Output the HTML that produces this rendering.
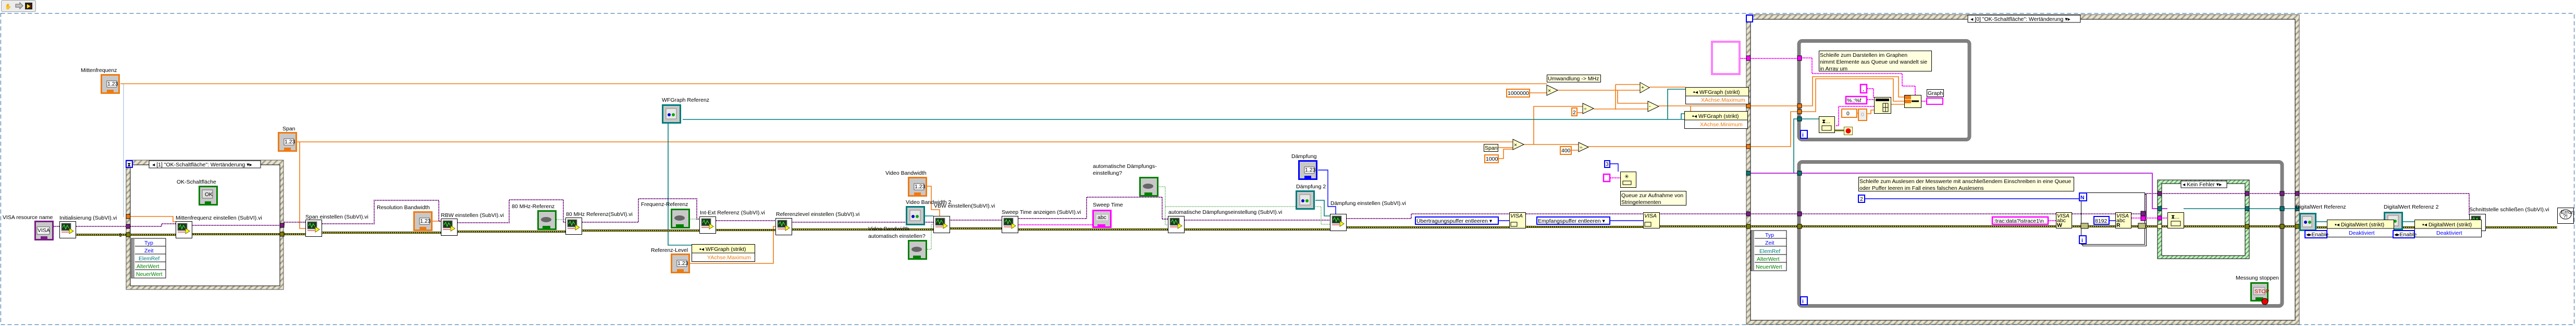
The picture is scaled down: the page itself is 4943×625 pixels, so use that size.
<!DOCTYPE html>
<html><head><meta charset="utf-8"><style>
html,body{margin:0;padding:0;background:#fff;width:4943px;height:625px;overflow:hidden}
svg{display:block}
text{font-family:"Liberation Sans",sans-serif;font-size:10.5px;fill:#000}
.o{stroke:#f07a10;stroke-width:1.6;fill:none}
.t{stroke:#007b7b;stroke-width:1.6;fill:none}
.p{stroke:#7a1e86;stroke-width:2;fill:none;stroke-dasharray:2 1}
.e1{stroke:#3c3c00;stroke-width:4;fill:none}
.e2{stroke:#f0f040;stroke-width:1.6;fill:none;stroke-dasharray:2 2}
.m{stroke:#ff00ff;stroke-width:2;fill:none;stroke-dasharray:2 1}
.b{stroke:#0000ff;stroke-width:1.4;fill:none}
.g{stroke:#008000;stroke-width:1;fill:none;stroke-dasharray:1.5 1.5}
.lb{stroke:#90b0e0;stroke-width:1;fill:none}
.yel{fill:#ffffe0;stroke:#000;stroke-width:1}
.node{fill:#ffffc8;stroke:#000;stroke-width:1}
</style></head><body>
<svg width="4943" height="625" viewBox="0 0 4943 625" xmlns="http://www.w3.org/2000/svg">
<defs>
<pattern id="hatch" width="8" height="8" patternUnits="userSpaceOnUse" patternTransform="rotate(45)">
<rect width="8" height="8" fill="#e8e4d0"/><rect width="3" height="8" fill="#a8a490"/></pattern>
<pattern id="ghatch" width="6" height="6" patternUnits="userSpaceOnUse" patternTransform="rotate(45)">
<rect width="6" height="6" fill="#c8f0c8"/><rect width="2" height="6" fill="#60b060"/></pattern>
</defs>

<!-- toolbar icon -->
<rect x="2.5" y="0.5" width="66" height="22" rx="3" fill="#ececec" stroke="#a0a0a0"/>
<text x="9" y="16" font-size="13">✋</text>
<path d="M30 8h8v-3l6 6-6 6v-3h-8z" fill="#c0c0c0" stroke="#666"/>
<rect x="48" y="5" width="14" height="13" fill="#222"/><path d="M50 11h10M50 14h10" stroke="#f00"/><path d="M52 8l6 4-6 4z" fill="#ff0"/>

<!-- dashed border -->
<rect x="1.5" y="25.5" width="4938" height="597" fill="none" stroke="#2e6da4" stroke-dasharray="8 5"/>

<!-- LEFT EVENT STRUCTURE -->
<rect x="242" y="307" width="302" height="248" fill="url(#hatch)" stroke="#555"/>
<rect x="250" y="316" width="287" height="232" fill="#fff" stroke="#000"/>
<rect x="242" y="308" width="12" height="13" fill="#fff" stroke="#00f" stroke-width="2"/>
<text x="244" y="319" font-size="9" fill="#00f">⧗</text>
<rect x="286" y="308" width="214" height="14" fill="#fff" stroke="#000"/>
<text x="292" y="319">◂ [1] "OK-Schaltfläche": Wertänderung  ▾▸</text>
<text x="339" y="352">OK-Schaltfläche</text>
<rect x="382.5" y="357.5" width="34" height="35" fill="#c8c8c8" stroke="#008000" stroke-width="3"/>
<rect x="388" y="364" width="20" height="16" fill="#e0e0e0" stroke="#666"/><text x="393" y="376" font-size="8">OK</text>
<rect x="393" y="386" width="12" height="7" fill="#008000"/>
<!-- event data node left -->
<rect x="252" y="457" width="66" height="76" fill="#fff" stroke="#000"/>
<rect x="253" y="458" width="5" height="74" fill="#999"/>
<g font-size="10.5">
<path d="M259 472H318M259 487H318M259 502H318M259 517H318" stroke="#000"/>
<text x="277" y="469" fill="#00f" style="fill:#00f">Typ</text>
<text x="277" y="484" style="fill:#00f">Zeit</text>
<text x="266" y="499" style="fill:#007b7b">ElemRef</text>
<text x="262" y="514" style="fill:#008000">AlterWert</text>
<text x="261" y="529" style="fill:#008000">NeuerWert</text>
</g>

<!-- RIGHT EVENT STRUCTURE -->
<rect x="3351" y="28" width="1061" height="594" fill="url(#hatch)" stroke="#555"/>
<rect x="3359" y="37" width="1045" height="577" fill="#fff" stroke="#000"/>
<rect x="3351" y="29" width="12" height="13" fill="#fff" stroke="#00f" stroke-width="2"/>
<rect x="3776" y="29" width="216" height="14" fill="#fff" stroke="#000"/>
<text x="3781" y="40">◂ [0] "OK-Schaltfläche": Wertänderung  ▾▸</text>
<!-- event data node right -->
<rect x="3360" y="442" width="68" height="77" fill="#fff" stroke="#000"/>
<rect x="3361" y="443" width="5" height="75" fill="#999"/>
<path d="M3367 457H3428M3367 472H3428M3367 488H3428M3367 503H3428" stroke="#000"/>
<text x="3387" y="454" style="fill:#00f">Typ</text>
<text x="3387" y="469" style="fill:#00f">Zeit</text>
<text x="3376" y="485" style="fill:#007b7b">ElemRef</text>
<text x="3371" y="500" style="fill:#008000">AlterWert</text>
<text x="3369" y="515" style="fill:#008000">NeuerWert</text>

<!-- upper loop -->
<rect x="3452" y="78.5" width="327" height="189" rx="6" fill="none" stroke="#808080" stroke-width="7"/>
<rect x="3455" y="250" width="13" height="15" fill="#fff" stroke="#00f" stroke-width="2"/><text x="3458" y="262" style="fill:#00f;font-weight:bold">i</text>
<rect x="3490.5" y="97.5" width="216" height="39" class="yel"/>
<text x="3492" y="109">Schleife zum Darstellen im Graphen</text>
<text x="3492" y="122">nimmt Elemente aus Queue und wandelt sie</text>
<text x="3492" y="135">in Array um</text>
<!-- lower loop -->
<rect x="3452" y="310.5" width="927" height="276" rx="6" fill="none" stroke="#808080" stroke-width="7"/>
<rect x="3455" y="569" width="13" height="15" fill="#fff" stroke="#00f" stroke-width="2"/><text x="3458" y="581" style="fill:#00f;font-weight:bold">i</text>
<rect x="3566.5" y="339.5" width="413" height="27" class="yel"/>
<text x="3568" y="351">Schleife zum Auslesen der Messwerte mit anschließendem Einschreiben in eine Queue</text>
<text x="3568" y="364">oder Puffer leeren im Fall eines falschen Auslesens</text>
<!-- case structure -->
<rect x="4140" y="345" width="176" height="151" fill="url(#ghatch)" stroke="#000"/>
<rect x="4148" y="352" width="160" height="138" fill="#fff" stroke="#000"/>
<rect x="4185" y="347" width="88" height="13" fill="#fff" stroke="#000"/><text x="4188" y="357">◂ Kein Fehler  ▾▸</text>
<!-- for loop -->
<rect x="3996.5" y="372.5" width="122" height="99" fill="#fff" stroke="#000"/>
<rect x="3993.5" y="369.5" width="122" height="99" fill="#fff" stroke="#000"/>
<rect x="3990" y="370" width="14" height="15" fill="#fff" stroke="#00f" stroke-width="2"/><text x="3992" y="382" style="fill:#00f;font-weight:bold">N</text>
<rect x="3990" y="452" width="13" height="15" fill="#fff" stroke="#00f" stroke-width="2"/><text x="3994" y="464" style="fill:#00f;font-weight:bold">i</text>

<!-- WIRES -->
<path class="lb" d="M237 160V416"/>
<path class="o" d="M231 160.5H2968M250 415H332V425H337M569 272H2903M575 272V438H586M829 424H846M1324 505H1484V434H1488M1779 357H1787V402H1803V414M2936 178H2968M2989 173H3147M3100 162V210M3100 162H3147M3104 173V198H3162M3058 209H3162M2876 304H2885V286H2903M2874 283H2903M2924 277H3029M2943 277V204H3037M3027 216H3037M3016 288H3029M3165 167H3234M3183 203H3351M3244 203V213M3048 281H3351M3359 203H3449M3359 281H3436V214H3449M3456 203H3478V147H3643V186H3655M3456 214H3484V151H3633V194H3655M3563 217H3566M3582 218H3590V211H3597M3628 200H3654"/>
<path class="t" d="M1310 229H3351M1282 236V470H1327M1775 414H1791M3200 229V171H3234M3226 228V218H3232M3359 332H3449M3442 332V228H3449M3456 228H3490M3456 332H4130V400H4159M4190 400H4412M2524 384H2541V414H2552M4442 425H4465M4611 425H4633" stroke-width="2.5"/>
<path class="m" d="M3340 112H3449M3456 111H3477V141H3650V165H3675V182M3090 341H3109M3359 332H3449M3456 332H4130V400H4159M3931 423H3945M4090 418H4159M1953 431H2096M3583 170H3595V187M3583 191H3596M3523 241H3528V204H3596M3686 194H3697" stroke-width="1.5"/>
<path class="p" d="M103 434H114M146 434H242M250 434H310V429H337M368 432H545V426H586M618 429H718V384H842V424H846M877 427H977V383H1081V426H1085M1117 426H1225V381H1337V420H1342M1374 423H1488M1519 426H1791M1822 422H1922M1953 419H2085V378H2230V420H2241M2273 422H2552M2583 419H2708V410H2896M2928 410H3153M3184 410H3945M3976 410H4059M4090 410H4118V371H4738V412"/>
<path class="e1" d="M146 450H337M368 449H586M618 446H846M877 444H1085M1117 442H1342M1374 441H1488M1519 440H1791M1822 438H1922M1953 440H2241M2273 440H2552M2583 436H2896M2928 435H3153M3184 434H3945M3976 434H4059M4090 434H4159M4190 434H4413M4444 436H4465M4593 436H4633M4761 436H4907"/>
<path class="e2" d="M146 450H337M368 449H586M618 446H846M877 444H1085M1117 442H1342M1374 441H1488M1519 440H1791M1822 438H1922M1953 440H2241M2273 440H2552M2583 436H2896M2928 435H3153M3184 434H3945M3976 434H4059M4090 434H4159M4190 434H4413M4444 436H4465M4593 436H4633M4761 436H4907"/>
<path d="M3520 250H3538" stroke="#6b6b00" stroke-width="3"/>
<path class="b" d="M3579 381H3990M3090 314H3105V329M2529 326H2548V396H2563V410M2876 423H2896M3090 423H3153M4047 423H4059"/>
<path class="g" d="M1068 421H1085M1325 420H1342M1779 478H1787V430H1791M2224 358H2236V431H2241M2236 396H2535V430H2552"/>

<!-- tunnels -->
<g stroke="#000" stroke-width="1">
<rect x="242" y="411" width="8" height="8" fill="#f07a10"/><rect x="242" y="430" width="8" height="8" fill="#7a1e86"/><rect x="242" y="446" width="8" height="8" fill="#808000"/>
<rect x="537" y="428" width="8" height="8" fill="#7a1e86"/><rect x="537" y="445" width="8" height="8" fill="#808000"/>
<rect x="3351" y="107" width="8" height="9" fill="#ff00ff"/><rect x="3351" y="199" width="8" height="8" fill="#f07a10"/><rect x="3351" y="277" width="8" height="8" fill="#f07a10"/><rect x="3351" y="328" width="8" height="8" fill="#007b7b"/><rect x="3351" y="406" width="8" height="8" fill="#7a1e86"/><rect x="3351" y="430" width="8" height="8" fill="#808000"/>
<rect x="3449" y="107" width="8" height="9" fill="#ff00ff"/><rect x="3449" y="199" width="8" height="8" fill="#f07a10"/><rect x="3449" y="210" width="8" height="8" fill="#f07a10"/><rect x="3449" y="224" width="8" height="8" fill="#007b7b"/>
<rect x="3449" y="328" width="8" height="8" fill="#007b7b"/><rect x="3449" y="406" width="8" height="8" fill="#7a1e86"/><rect x="3449" y="430" width="8" height="8" fill="#808000"/>
<rect x="4140" y="367" width="8" height="8" fill="#7a1e86"/><rect x="4140" y="396" width="8" height="8" fill="#007b7b"/><rect x="4140" y="414" width="8" height="8" fill="#ff00ff"/><rect x="4140" y="430" width="8" height="8" fill="#ffffc0"/>
<rect x="4308" y="367" width="8" height="8" fill="#7a1e86"/><rect x="4308" y="396" width="8" height="8" fill="#007b7b"/><rect x="4308" y="430" width="8" height="8" fill="#808000"/>
<rect x="4375" y="367" width="8" height="8" fill="#7a1e86"/><rect x="4375" y="396" width="8" height="8" fill="#007b7b"/><rect x="4375" y="430" width="8" height="8" fill="#808000"/>
<rect x="4404" y="367" width="8" height="8" fill="#7a1e86"/><rect x="4404" y="396" width="8" height="8" fill="#007b7b"/><rect x="4404" y="430" width="8" height="8" fill="#808000"/>
<rect x="4108" y="405" width="9" height="9" fill="#7a1e86"/><rect x="4108" y="414" width="9" height="9" fill="#ff00ff"/>
<rect x="3993" y="428" width="14" height="10" fill="#c0c080"/><rect x="4103" y="428" width="14" height="10" fill="#c0c080"/>
</g>

<!-- subVIs -->
<g id="svs">
<g transform="translate(114,424)"><rect x=".5" y=".5" width="31" height="32" fill="#fff" stroke="#000"/><rect x="4" y="4" width="18" height="14" fill="#203820" stroke="#888"/><path d="M6 12l3-5 3 8 3-7 3 5" stroke="#3f3" fill="none"/><path d="M19 14l8 5-8 5z" fill="#ff0" stroke="#660"/><path d="M4 21h14" stroke="#c00"/></g>
<g transform="translate(337,424)"><rect x=".5" y=".5" width="31" height="32" fill="#fff" stroke="#000"/><rect x="4" y="4" width="18" height="14" fill="#203820" stroke="#888"/><path d="M6 12l3-5 3 8 3-7 3 5" stroke="#3f3" fill="none"/><path d="M19 14l8 5-8 5z" fill="#ff0" stroke="#660"/><path d="M4 21h14" stroke="#c00"/></g>
<g transform="translate(586,421)"><rect x=".5" y=".5" width="31" height="32" fill="#fff" stroke="#000"/><rect x="4" y="4" width="18" height="14" fill="#203820" stroke="#888"/><path d="M6 12l3-5 3 8 3-7 3 5" stroke="#3f3" fill="none"/><path d="M19 14l8 5-8 5z" fill="#ff0" stroke="#660"/><path d="M4 21h14" stroke="#c00"/></g>
<g transform="translate(846,419)"><rect x=".5" y=".5" width="31" height="32" fill="#fff" stroke="#000"/><rect x="4" y="4" width="18" height="14" fill="#203820" stroke="#888"/><path d="M6 12l3-5 3 8 3-7 3 5" stroke="#3f3" fill="none"/><path d="M19 14l8 5-8 5z" fill="#ff0" stroke="#660"/><path d="M4 21h14" stroke="#c00"/></g>
<g transform="translate(1085,417)"><rect x=".5" y=".5" width="31" height="32" fill="#fff" stroke="#000"/><rect x="4" y="4" width="18" height="14" fill="#203820" stroke="#888"/><path d="M6 12l3-5 3 8 3-7 3 5" stroke="#3f3" fill="none"/><path d="M19 14l8 5-8 5z" fill="#ff0" stroke="#660"/><path d="M4 21h14" stroke="#c00"/></g>
<g transform="translate(1342,415)"><rect x=".5" y=".5" width="31" height="32" fill="#fff" stroke="#000"/><rect x="4" y="4" width="18" height="14" fill="#203820" stroke="#888"/><path d="M6 12l3-5 3 8 3-7 3 5" stroke="#3f3" fill="none"/><path d="M19 14l8 5-8 5z" fill="#ff0" stroke="#660"/><path d="M4 21h14" stroke="#c00"/></g>
<g transform="translate(1488,418)"><rect x=".5" y=".5" width="31" height="32" fill="#fff" stroke="#000"/><rect x="4" y="4" width="18" height="14" fill="#203820" stroke="#888"/><path d="M6 12l3-5 3 8 3-7 3 5" stroke="#3f3" fill="none"/><path d="M19 14l8 5-8 5z" fill="#ff0" stroke="#660"/><path d="M4 21h14" stroke="#c00"/></g>
<g transform="translate(1791,414)"><rect x=".5" y=".5" width="31" height="32" fill="#fff" stroke="#000"/><rect x="4" y="4" width="18" height="14" fill="#203820" stroke="#888"/><path d="M6 12l3-5 3 8 3-7 3 5" stroke="#3f3" fill="none"/><path d="M19 14l8 5-8 5z" fill="#ff0" stroke="#660"/><path d="M4 21h14" stroke="#c00"/></g>
<g transform="translate(1922,414)"><rect x=".5" y=".5" width="31" height="32" fill="#fff" stroke="#000"/><rect x="4" y="4" width="18" height="14" fill="#203820" stroke="#888"/><path d="M6 12l3-5 3 8 3-7 3 5" stroke="#3f3" fill="none"/><path d="M19 14l8 5-8 5z" fill="#ff0" stroke="#660"/><path d="M4 21h14" stroke="#c00"/></g>
<g transform="translate(2241,414)"><rect x=".5" y=".5" width="31" height="32" fill="#fff" stroke="#000"/><rect x="4" y="4" width="18" height="14" fill="#203820" stroke="#888"/><path d="M6 12l3-5 3 8 3-7 3 5" stroke="#3f3" fill="none"/><path d="M19 14l8 5-8 5z" fill="#ff0" stroke="#660"/><path d="M4 21h14" stroke="#c00"/></g>
<g transform="translate(2552,410)"><rect x=".5" y=".5" width="31" height="32" fill="#fff" stroke="#000"/><rect x="4" y="4" width="18" height="14" fill="#203820" stroke="#888"/><path d="M6 12l3-5 3 8 3-7 3 5" stroke="#3f3" fill="none"/><path d="M19 14l8 5-8 5z" fill="#ff0" stroke="#660"/><path d="M4 21h14" stroke="#c00"/></g>
<g transform="translate(4738,410)"><rect x=".5" y=".5" width="31" height="32" fill="#fff" stroke="#000"/><rect x="4" y="4" width="18" height="14" fill="#203820" stroke="#888"/><path d="M6 12l3-5 3 8 3-7 3 5" stroke="#3f3" fill="none"/></g>
</g>
<text x="228" y="454" font-size="8">1</text>

<!-- controls -->
<g transform="translate(193,142)"><rect x="1.5" y="1.5" width="34" height="35" fill="#c8c8c8" stroke="#f07a10" stroke-width="3"/><rect x="12" y="13" width="19" height="12" fill="#fff" stroke="#000" stroke-width=".6"/><text x="13" y="22" font-size="8">1.23</text><rect x="12" y="30" width="13" height="7" fill="#f07a10"/></g>
<g transform="translate(533,253)"><rect x="1.5" y="1.5" width="34" height="35" fill="#c8c8c8" stroke="#f07a10" stroke-width="3"/><rect x="12" y="13" width="19" height="12" fill="#fff" stroke="#000" stroke-width=".6"/><text x="13" y="22" font-size="8">1.23</text><rect x="12" y="30" width="13" height="7" fill="#f07a10"/></g>
<g transform="translate(793,405)"><rect x="1.5" y="1.5" width="34" height="35" fill="#c8c8c8" stroke="#f07a10" stroke-width="3"/><rect x="12" y="13" width="19" height="12" fill="#fff" stroke="#000" stroke-width=".6"/><text x="13" y="22" font-size="8">1.23</text><rect x="12" y="30" width="13" height="7" fill="#f07a10"/></g>
<g transform="translate(1287,486)"><rect x="1.5" y="1.5" width="34" height="35" fill="#c8c8c8" stroke="#f07a10" stroke-width="3"/><rect x="12" y="13" width="19" height="12" fill="#fff" stroke="#000" stroke-width=".6"/><text x="13" y="22" font-size="8">1.23</text><rect x="12" y="30" width="13" height="7" fill="#f07a10"/></g>
<g transform="translate(1742,339)"><rect x="1.5" y="1.5" width="34" height="35" fill="#c8c8c8" stroke="#f07a10" stroke-width="3"/><rect x="12" y="13" width="19" height="12" fill="#fff" stroke="#000" stroke-width=".6"/><text x="13" y="22" font-size="8">1.23</text><rect x="12" y="30" width="13" height="7" fill="#f07a10"/></g>
<g transform="translate(2491,307)"><rect x="1.5" y="1.5" width="34" height="35" fill="#c8c8c8" stroke="#0000ff" stroke-width="3"/><rect x="12" y="13" width="19" height="12" fill="#fff" stroke="#000" stroke-width=".6"/><text x="13" y="22" font-size="8">1.23</text><rect x="12" y="30" width="13" height="7" fill="#0000ff"/></g>
<!-- VISA resource -->
<g transform="translate(66,423)"><rect x="1.5" y="1.5" width="34" height="35" fill="#c8c8c8" stroke="#7a1e86" stroke-width="3"/><rect x="5" y="12" width="24" height="14" fill="#fff" stroke="#000" stroke-width=".6"/><text x="6" y="22" font-size="8">VISA</text><rect x="12" y="30" width="13" height="7" fill="#7a1e86"/></g>
<!-- bools -->
<g transform="translate(1031,403)"><rect x="1.5" y="1.5" width="34" height="35" fill="#c8c8c8" stroke="#008000" stroke-width="3"/><ellipse cx="17" cy="18" rx="10" ry="5" fill="#666"/><rect x="10" y="30" width="15" height="7" fill="#008000"/></g>
<g transform="translate(1287,400)"><rect x="1.5" y="1.5" width="34" height="35" fill="#c8c8c8" stroke="#008000" stroke-width="3"/><ellipse cx="17" cy="18" rx="10" ry="5" fill="#666"/><rect x="10" y="30" width="15" height="7" fill="#008000"/></g>
<g transform="translate(1742,460)"><rect x="1.5" y="1.5" width="34" height="35" fill="#c8c8c8" stroke="#008000" stroke-width="3"/><ellipse cx="17" cy="18" rx="10" ry="5" fill="#666"/><rect x="10" y="30" width="15" height="7" fill="#008000"/></g>
<g transform="translate(2186,339)"><rect x="1.5" y="1.5" width="34" height="35" fill="#c8c8c8" stroke="#008000" stroke-width="3"/><ellipse cx="17" cy="18" rx="10" ry="5" fill="#666"/><rect x="10" y="30" width="15" height="7" fill="#008000"/></g>
<g transform="translate(4318,541)"><rect x="1.5" y="1.5" width="32" height="34" fill="#c8c8c8" stroke="#008000" stroke-width="3"/><rect x="6" y="10" width="22" height="14" fill="#ddd" stroke="#888"/><text x="8" y="21" font-size="7" style="fill:#d00">STOP</text><rect x="10" y="29" width="15" height="7" fill="#008000"/></g>
<!-- refs -->
<g transform="translate(1270,200)"><rect x="1.5" y="1.5" width="34" height="34" fill="#c8c8c8" stroke="#007b7b" stroke-width="3"/><rect x="8" y="8" width="20" height="20" fill="#e8e8e8" stroke="#888"/><circle cx="14" cy="20" r="3" fill="#00c"/><circle cx="22" cy="20" r="3" fill="#0a0"/></g>
<g transform="translate(1738,395)"><rect x="1.5" y="1.5" width="34" height="34" fill="#c8c8c8" stroke="#007b7b" stroke-width="3"/><rect x="8" y="8" width="20" height="20" fill="#e8e8e8" stroke="#888"/><circle cx="14" cy="20" r="3" fill="#00c"/><circle cx="22" cy="20" r="3" fill="#0a0"/></g>
<g transform="translate(2486,365)"><rect x="1.5" y="1.5" width="34" height="34" fill="#c8c8c8" stroke="#007b7b" stroke-width="3"/><rect x="8" y="8" width="20" height="20" fill="#e8e8e8" stroke="#888"/><circle cx="14" cy="20" r="3" fill="#00c"/><circle cx="22" cy="20" r="3" fill="#0a0"/></g>
<g transform="translate(4412,408)"><rect x="1.5" y="1.5" width="30" height="32" fill="#c8c8c8" stroke="#007b7b" stroke-width="3"/><rect x="6" y="7" width="18" height="20" fill="#e8e8e8" stroke="#888"/><circle cx="12" cy="18" r="3" fill="#00c"/><circle cx="20" cy="18" r="3" fill="#0a0"/></g>
<g transform="translate(4574,406)"><rect x="1.5" y="1.5" width="34" height="32" fill="#c8c8c8" stroke="#007b7b" stroke-width="3"/><rect x="8" y="7" width="20" height="20" fill="#e8e8e8" stroke="#888"/><circle cx="14" cy="18" r="3" fill="#00c"/><circle cx="22" cy="18" r="3" fill="#0a0"/></g>
<!-- sweep time indicator -->
<g transform="translate(2096,402)"><rect x="1.5" y="1.5" width="34" height="32" fill="#c8c8c8" stroke="#ff00ff" stroke-width="3"/><rect x="8" y="10" width="22" height="10" fill="#eee"/><text x="10" y="18" font-size="8">abc</text><rect x="10" y="28" width="15" height="7" fill="#ff00ff"/></g>

<!-- property nodes -->
<g transform="translate(1327,468)"><rect x=".5" y=".5" width="121" height="33" fill="#fff" stroke="#000"/><rect x="1" y="1" width="120" height="16" fill="#ffffc8"/><path d="M1 17H122" stroke="#000"/><text x="15" y="13">▪◂ WFGraph (strikt)</text><text x="30" y="29" style="fill:#f07a10">YAchse.Maximum</text></g>
<g transform="translate(3234,167)"><rect x=".5" y=".5" width="121" height="32" fill="#fff" stroke="#000"/><rect x="1" y="1" width="120" height="16" fill="#ffffc8"/><path d="M1 17H122" stroke="#000"/><text x="15" y="13">▪◂ WFGraph (strikt)</text><text x="30" y="28" style="fill:#f07a10">XAchse.Maximum</text></g>
<g transform="translate(3232,213)"><rect x=".5" y=".5" width="121" height="33" fill="#fff" stroke="#000"/><rect x="1" y="1" width="120" height="16" fill="#ffffc8"/><path d="M1 17H122" stroke="#000"/><text x="15" y="13">▪◂ WFGraph (strikt)</text><text x="30" y="29" style="fill:#f07a10">XAchse.Minimum</text></g>
<g transform="translate(4465,421)"><rect x=".5" y=".5" width="128" height="33" fill="#fff" stroke="#000"/><rect x="1" y="1" width="127" height="16" fill="#ffffc8"/><path d="M1 17H129" stroke="#000"/><text x="15" y="13">▪◂ DigitalWert (strikt)</text><text x="42" y="29" style="fill:#00f">Deaktiviert</text></g>
<g transform="translate(4633,421)"><rect x=".5" y=".5" width="128" height="33" fill="#fff" stroke="#000"/><rect x="1" y="1" width="127" height="16" fill="#ffffc8"/><path d="M1 17H129" stroke="#000"/><text x="15" y="13">▪◂ DigitalWert (strikt)</text><text x="42" y="29" style="fill:#00f">Deaktiviert</text></g>
<rect x="4423" y="442" width="42" height="14" fill="#fff" stroke="#00f" stroke-width="2"/><text x="4425" y="453">◂▸Enable</text>
<rect x="4592" y="442" width="41" height="14" fill="#fff" stroke="#00f" stroke-width="2"/><text x="4594" y="453">◂▸Enable</text>
<!-- error handler -->
<rect x="4907.5" y="398.5" width="31" height="30" fill="#fff" stroke="#000"/>
<ellipse cx="4923" cy="411" rx="11" ry="9" fill="#fff" stroke="#000"/><text x="4914" y="410" font-size="7">Error</text><text x="4918" y="418" font-size="8">?!</text>

<!-- constants & nodes middle -->
<rect x="2891" y="171" width="44" height="15" fill="#fff" stroke="#f07a10" stroke-width="2"/><text x="2893" y="182">1000000</text>
<rect x="3016" y="207" width="10" height="15" fill="#fff" stroke="#f07a10" stroke-width="2"/><text x="3018" y="219">2</text>
<rect x="2847.5" y="276.5" width="27" height="14" class="yel"/><text x="2849" y="287">Span</text>
<rect x="2849" y="297" width="26" height="15" fill="#fff" stroke="#f07a10" stroke-width="2"/><text x="2851" y="308">1000</text>
<rect x="2994" y="281" width="21" height="15" fill="#fff" stroke="#f07a10" stroke-width="2"/><text x="2996" y="292">400</text>
<rect x="2968.5" y="143.5" width="103" height="14" class="yel"/><text x="2970" y="154">Umwandlung -&gt; MHz</text>
<path class="node" d="M2968 163l21 10-21 10z"/><text x="2970" y="177" font-size="8">×</text>
<path class="node" d="M2903 267l21 10-21 10z"/><text x="2905" y="281" font-size="8">×</text>
<path class="node" d="M3029 273l19 9-19 9z"/><text x="3031" y="286" font-size="8">÷</text>
<path class="node" d="M3037 198l21 10-21 10z"/><text x="3039" y="212" font-size="8">÷</text>
<path class="node" d="M3147 158l18 10-18 10z"/><text x="3149" y="171" font-size="9">+</text>
<path class="node" d="M3162 194l21 10-21 10z"/><text x="3164" y="207" font-size="9">-</text>
<rect x="3079" y="308" width="10" height="13" fill="#fff" stroke="#00f" stroke-width="2"/><text x="3081" y="318">3</text>
<rect x="3077" y="334" width="12" height="14" fill="#fff" stroke="#ff00ff" stroke-width="2.5"/>
<rect x="3109.5" y="329.5" width="30" height="30" class="node"/><text x="3117" y="342" font-size="9">✳</text><rect x="3114" y="347" width="16" height="7" fill="none" stroke="#000"/>
<rect x="3109.5" y="366.5" width="126" height="27" class="yel"/><text x="3111" y="378">Queue zur Aufnahme von</text><text x="3111" y="391">Stringelementen</text>
<rect x="3284" y="79" width="55" height="64" fill="none" stroke="#ff00ff" stroke-width="1"/><rect x="3286" y="81" width="51" height="60" fill="none" stroke="#ff00ff" stroke-width="1"/>
<rect x="2716" y="416" width="159" height="14" fill="#fff" stroke="#00f" stroke-width="2"/><text x="2718" y="427">Übertragungspuffer entleeren ▾</text>
<rect x="2949" y="416" width="140" height="14" fill="#fff" stroke="#00f" stroke-width="2"/><text x="2951" y="427">Empfangspuffer entleeren ▾</text>
<rect x="2896.5" y="407.5" width="31" height="30" class="node"/><text x="2898" y="417" font-size="7" font-style="italic">VISA</text><rect x="2899" y="426" width="12" height="8" fill="none" stroke="#000"/>
<rect x="3153.5" y="407.5" width="31" height="30" class="node"/><text x="3155" y="417" font-size="7" font-style="italic">VISA</text><rect x="3156" y="426" width="12" height="8" fill="none" stroke="#000"/>
<!-- lower loop nodes -->
<rect x="3566" y="374" width="12" height="14" fill="#fff" stroke="#00f" stroke-width="2"/><text x="3569" y="385">2</text>
<rect x="3823" y="416" width="107" height="14" fill="#fff" stroke="#ff00ff" stroke-width="2.5"/><text x="3826" y="427">:trac:data?\strace1\n</text>
<rect x="3945.5" y="407.5" width="30" height="30" class="node"/><text x="3947" y="417" font-size="7" font-style="italic">VISA</text><text x="3947" y="426" font-size="7">abc</text><text x="3947" y="435" font-size="7" font-weight="bold">W</text>
<rect x="4018" y="415" width="29" height="15" fill="#fff" stroke="#00f" stroke-width="2"/><text x="4020" y="427">8192</text>
<rect x="4059.5" y="407.5" width="30" height="30" class="node"/><text x="4061" y="417" font-size="7" font-style="italic">VISA</text><text x="4061" y="426" font-size="7">abc</text><text x="4061" y="435" font-size="7" font-weight="bold">R</text>
<rect x="4159.5" y="407.5" width="31" height="30" class="node"/><text x="4166" y="419" font-size="8">⧗...</text><rect x="4166" y="424" width="18" height="9" fill="none" stroke="#000"/>
<circle cx="4346" cy="578" r="6" fill="#e00" stroke="#000"/>
<!-- upper loop nodes -->
<rect x="3490.5" y="223.5" width="30" height="31" class="node"/><text x="3496" y="236" font-size="8">⧗...</text><rect x="3496" y="241" width="18" height="9" fill="none" stroke="#000"/>
<rect x="3538.5" y="243.5" width="16" height="15" fill="#ffffc8" stroke="#6b6b00"/><circle cx="3546.5" cy="251" r="5" fill="#e00"/>
<rect x="3570" y="162" width="12" height="16" fill="#fff" stroke="#ff00ff" stroke-width="2.5"/><text x="3574" y="174">,</text>
<rect x="3542" y="185" width="40" height="14" fill="#fff" stroke="#ff00ff" stroke-width="2.5"/><text x="3544" y="196">%.;%f</text>
<rect x="3596.5" y="186.5" width="32" height="31" class="node"/><rect x="3599" y="189" width="26" height="5" fill="#000"/><path d="M3613 198h10v16h-10z M3613 206h10M3618 198v16" stroke="#000" fill="none"/>
<rect x="3534" y="209" width="29" height="16" fill="#fff" stroke="#f07a10" stroke-width="2"/><text x="3543" y="221">0</text>
<rect x="3566" y="209" width="16" height="22" fill="#eee" stroke="#f07a10" stroke-width="2"/><text x="3571" y="223" style="fill:#aaa">0</text>
<rect x="3654.5" y="182.5" width="32" height="24" class="node"/><rect x="3655" y="183" width="12" height="7" fill="#f07a10"/><rect x="3655" y="191" width="12" height="7" fill="#f07a10"/><path d="M3668 194h14" stroke="#000" stroke-width="3"/>
<rect x="3697.5" y="171.5" width="32" height="14" fill="#fff" stroke="#000"/><text x="3699" y="182">Graph</text>
<rect x="3697" y="188" width="31" height="12" fill="#fff" stroke="#ff00ff" stroke-width="2"/>

<!-- LABELS -->
<text x="155" y="138">Mittenfrequenz</text>
<text x="5" y="420">VISA resource name</text>
<text x="114" y="421">Initialisierung (SubVI).vi</text>
<text x="337" y="421">Mittenfrequenz einstellen (SubVI).vi</text>
<text x="542" y="250">Span</text>
<text x="586" y="419">Span einstellen (SubVI).vi</text>
<text x="723" y="401">Resolution Bandwidth</text>
<text x="846" y="416">RBW einstellen (SubVI).vi</text>
<text x="982" y="399">80 MHz-Referenz</text>
<text x="1086" y="414">80 MHz Referenz(SubVI).vi</text>
<text x="1270" y="195">WFGraph Referenz</text>
<text x="1230" y="395">Frequenz-Referenz</text>
<text x="1343" y="411">Int-Ext Referenz (SubVI).vi</text>
<text x="1249" y="483">Referenz-Level</text>
<text x="1489" y="414">Referenzlevel einstellen (SubVI).vi</text>
<text x="1699" y="335">Video Bandwidth</text>
<text x="1738" y="391">Video Bandwidth 2</text>
<text x="1792" y="398">VBW einstellen(SubVI).vi</text>
<text x="1666" y="442">Video Bandwidth</text>
<text x="1666" y="456">automatisch einstellen?</text>
<text x="1922" y="410">Sweep Time anzeigen (SubVI).vi</text>
<text x="2097" y="396">Sweep Time</text>
<text x="2097" y="322">automatische Dämpfungs-</text>
<text x="2097" y="335">einstellung?</text>
<text x="2242" y="410">automatische Dämpfungseinstellung (SubVI).vi</text>
<text x="2478" y="303">Dämpfung</text>
<text x="2487" y="361">Dämpfung 2</text>
<text x="2553" y="393">Dämpfung einstellen (SubVI).vi</text>
<text x="4405" y="400">DigitalWert Referenz</text>
<text x="4574" y="400">DigitalWert Referenz 2</text>
<text x="4738" y="405">Schnittstelle schließen (SubVI).vi</text>
<text x="4290" y="536">Messung stoppen</text>
</svg>
</body></html>
